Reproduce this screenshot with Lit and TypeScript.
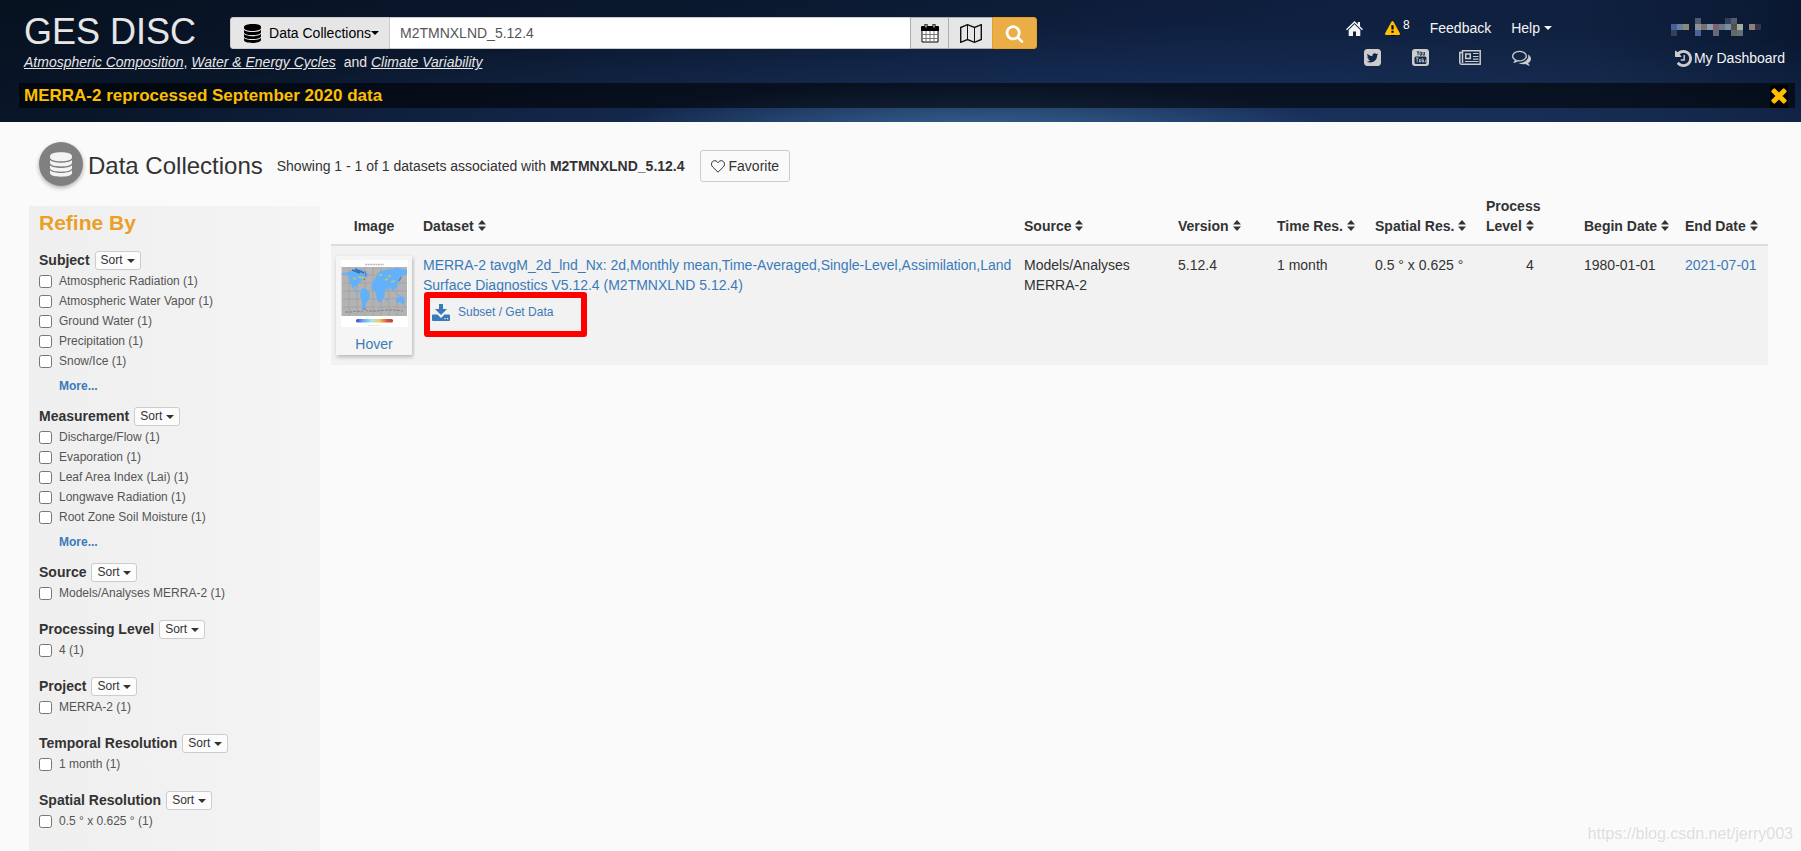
import { LitElement, html, css, svg, nothing } from "lit";
import { customElement } from "lit/decorators.js";

interface Facet {
  name: string;
  items: string[];
  more?: boolean;
}

const FACETS: Facet[] = [
  {
    name: "Subject",
    items: ["Atmospheric Radiation (1)", "Atmospheric Water Vapor (1)", "Ground Water (1)", "Precipitation (1)", "Snow/Ice (1)"],
    more: true,
  },
  {
    name: "Measurement",
    items: ["Discharge/Flow (1)", "Evaporation (1)", "Leaf Area Index (Lai) (1)", "Longwave Radiation (1)", "Root Zone Soil Moisture (1)"],
    more: true,
  },
  { name: "Source", items: ["Models/Analyses MERRA-2 (1)"] },
  { name: "Processing Level", items: ["4 (1)"] },
  { name: "Project", items: ["MERRA-2 (1)"] },
  { name: "Temporal Resolution", items: ["1 month (1)"] },
  { name: "Spatial Resolution", items: ["0.5 ° x 0.625 ° (1)"] },
];

const COLUMNS = ["Dataset", "Source", "Version", "Time Res.", "Spatial Res.", "Process Level", "Begin Date", "End Date"];
const COLUMN_CLASSES = ["c-dataset", "c-source", "c-version", "c-time", "c-spatial", "c-level", "c-begin", "c-end"];

const PATHS = {
  search:
    "M1216 832q0-185-131.5-316.5t-316.5-131.5-316.5 131.5-131.5 316.5 131.5 316.5 316.5 131.5 316.5-131.5 131.5-316.5zm512 832q0 52-38 90t-90 38q-54 0-90-38l-343-342q-179 124-399 124-143 0-273.5-55.5t-225-150-150-225-55.5-273.5 55.5-273.5 150-225 225-150 273.5-55.5 273.5 55.5 225 150 150 225 55.5 273.5q0 220-124 399l343 343q37 37 37 90z",
  times:
    "M1490 1322q0 40-28 68l-136 136q-28 28-68 28t-68-28l-294-294-294 294q-28 28-68 28t-68-28l-136-136q-28-28-28-68t28-68l294-294-294-294q-28-28-28-68t28-68l136-136q28-28 68-28t68 28l294 294 294-294q28-28 68-28t68 28l136 136q28 28 28 68t-28 68l-294 294 294 294q28 28 28 68z",
  history:
    "M1664 896q0 156-61 298t-164 245-245 164-298 61q-172 0-327-72.5t-264-204.5q-7-10-6.5-22.5t8.5-20.5l137-138q10-9 25-9 16 2 23 12 73 95 179 147t225 52q104 0 198.5-40.5t163.5-109.5 109.5-163.5 40.5-198.5-40.5-198.5-109.5-163.5-163.5-109.5-198.5-40.5q-98 0-188 35.5t-160 101.5l137 138q31 30 14 69-17 40-59 40h-448q-26 0-45-19t-19-45v-448q0-42 40-59 39-17 69 14l130 129q107-101 244.5-156.5t284.5-55.5q156 0 298 61t245 164 164 245 61 298zm-640-288v448q0 14-9 23t-23 9h-320q-14 0-23-9t-9-23v-64q0-14 9-23t23-9h224v-352q0-14 9-23t23-9h64q14 0 23 9t9 23z",
  twitter:
    "M1408 610q-56 25-121 34 68-40 93-117-65 38-134 51-61-66-153-66-87 0-148.5 61.5t-61.5 148.5q0 29 5 48-129-7-242-65t-192-155q-29 50-29 106 0 114 91 175-47-1-100-26v2q0 75 50 133.5t123 72.5q-29 8-51 8-13 0-39-4 21 63 74.5 104t121.5 42q-116 90-261 90-26 0-50-3 148 94 322 94 112 0 210-35.5t168-95 120.5-137 75-162 24.5-168.5q0-18-1-27 63-45 105-109zm256-194v960q0 119-84.5 203.5t-203.5 84.5h-960q-119 0-203.5-84.5t-84.5-203.5v-960q0-119 84.5-203.5t203.5-84.5h960q119 0 203.5 84.5t84.5 203.5z",
  comments:
    "M704 384q-153 0-286 52t-211.5 141-78.5 191q0 82 53 158t149 132l97 56-35 84q34-20 62-39l44-31 53 10q78 14 153 14 153 0 286-52t211.5-141 78.5-191-78.5-191-211.5-141-286-52zm0-128q191 0 353.5 68.5t256.5 186.5 94 257-94 257-256.5 186.5-353.5 68.5q-86 0-176-16-124 88-278 128-36 9-86 16h-3q-11 0-20.5-8t-11.5-21q-1-3-1-6.5t.5-6.5 2-6l2.5-5 3.5-5.5 4-5 4.5-5 4-4.5q5-6 23-25t26-29.5 22.5-29 25-38.5 20.5-44q-124-72-195-177t-71-224q0-139 94-257t256.5-186.5 353.5-68.5zm822 1169q10 24 20.5 44t25 38.5 22.5 29 26 29.5 23 25q1 1 4 4.5t4.5 5 4 5 3.5 5.5l2.5 5 2 6 .5 6.5-1 6.5q-3 14-13 22t-22 7q-50-7-86-16-154-40-278-128-90 16-176 16-271 0-472-132 58 4 88 4 161 0 309-45t264-129q125-92 192-212t67-254q0-77-23-152 129 71 204 178t75 230q0 120-71 224.5t-195 176.5z",
  warning:
    "M1024 1375v-190q0-14-9.5-23.5t-22.5-9.5h-192q-13 0-22.5 9.5t-9.5 23.5v190q0 14 9.5 23.5t22.5 9.5h192q13 0 22.5-9.5t9.5-23.5zm-2-374l18-459q0-12-10-19-13-11-24-11h-220q-11 0-24 11-10 7-10 21l17 457q0 10 10 16.5t24 6.5h185q14 0 23.5-6.5t10.5-16.5zm-14-934l768 1408q35 63-2 126-17 29-46.5 46t-63.5 17h-1536q-34 0-63.5-17t-46.5-46q-37-63-2-126l768-1408q17-31 47-49t65-18 65 18 47 49z",
};

const glyph = (d: string, size: number, viewBox = "0 0 1792 1792") => html`
  <svg class="icon" width=${size} height=${size} viewBox=${viewBox} fill="currentColor" aria-hidden="true"><path d=${d} /></svg>
`;

const caret = html`<svg class="icon" width="8" height="4" viewBox="0 0 8 4" fill="currentColor" aria-hidden="true"><path d="M0 0h8L4 4z" /></svg>`;

const sortIcon = html`<svg class="sort-icon" width="8" height="11" viewBox="0 0 8 11" fill="currentColor" aria-hidden="true"><path d="M4 0l4 4.600H0zM4 11L0 6.400h8z" /></svg>`;

const database = (w: number, h: number) => html`
  <svg class="icon" width=${w} height=${h} viewBox="0 0 18 20" fill="currentColor" aria-hidden="true">
    <path d="M0 3.200C0 1 4 0 9 0s9 1 9 3.200v1C18 6.200 14 7.300 9 7.300S0 6.200 0 4.200z" />
    <path d="M0 6.300c1.500 1.600 5 2.200 9 2.200s7.500-.6 9-2.200v2.300c0 2-4 3-9 3s-9-1-9-3z" />
    <path d="M0 10.600c1.500 1.600 5 2.200 9 2.200s7.500-.6 9-2.200v2.300c0 2-4 3-9 3s-9-1-9-3z" />
    <path d="M0 14.800C1.500 16.400 5 17 9 17s7.500-.6 9-2.200V17c0 2-4 3-9 3s-9-1-9-3z" />
  </svg>
`;

/* Privacy mosaic that stands in for the signed-in user's name: [column, row, colour]. */
const MOSAIC: [number, number, string][] = [
  [4, 0, "#4f5b75"], [9, 0, "#33415f"], [10, 0, "#545d70"],
  [0, 1, "#4a5f9a"], [1, 1, "#6580a0"], [2, 1, "#8c8c70"], [4, 1, "#909094"], [5, 1, "#76706e"],
  [6, 1, "#8c9ab0"], [7, 1, "#7c6072"], [8, 1, "#6c7684"], [9, 1, "#7890a4"], [10, 1, "#505050"],
  [11, 1, "#a4ac9f"], [13, 1, "#8c8078"], [14, 1, "#33344a"],
  [0, 2, "#364058"], [4, 2, "#4c629c"], [7, 2, "#646878"], [10, 2, "#646a60"], [11, 2, "#60707c"],
];

@customElement("app-root")
export class AppRoot extends LitElement {
  static styles = css`
    :host {
      display: flex;
      flex-direction: column;
      min-height: 100vh;
      position: relative;
      background: #fafafa;
      color: #333;
      font: 14px/20px "Liberation Sans", Arial, Helvetica, sans-serif;
    }
    * {
      box-sizing: border-box;
    }
    h1, h2, h3, p {
      margin: 0;
    }
    a {
      color: #3b7ab8;
      text-decoration: none;
    }
    button, input {
      font: inherit;
      color: inherit;
      margin: 0;
    }
    button {
      cursor: pointer;
    }
    .icon {
      display: block;
      flex: none;
    }

    .top {
      color: #fff;
      padding: 12px 0 14px;
      background:
        radial-gradient(ellipse 20% 40% at 54% 108%, rgba(62, 110, 158, 0.8), rgba(40, 80, 130, 0) 100%),
        radial-gradient(ellipse 60% 90% at 65% 108%, rgba(28, 54, 100, 0.9), rgba(20, 40, 80, 0) 100%),
        linear-gradient(90deg, rgba(0, 0, 0, 0) 88%, rgba(4, 14, 36, 0.5) 100%),
        linear-gradient(165deg, #06111f 0%, #0b1930 35%, #0f2040 60%, #10233f 100%);
    }
    .masthead {
      display: grid;
      grid-template-columns: 206px minmax(0, 54fr) minmax(0, 50fr);
      padding: 0 16px 0 24px;
    }
    .brand {
      font-size: 36px;
      line-height: 40px;
      font-weight: 400;
      color: #e6e6e6;
    }
    .tagline {
      grid-column: 1 / 3;
      color: #e6e6e6;
    }
    .tagline a {
      color: inherit;
      font-style: italic;
      text-decoration: underline;
    }
    .tagline .and {
      margin-left: 4px;
    }
    .search {
      display: flex;
      height: 32px;
      margin-top: 5px;
      color: #000;
    }
    .search button {
      display: flex;
      align-items: center;
      justify-content: center;
      flex: none;
      padding: 0;
      border: 1px solid #adadad;
      background: #e6e6e6;
    }
    .search .scope {
      width: 160px;
      padding-left: 3px;
      border-color: #ccc;
      border-radius: 3px 0 0 3px;
    }
    .scope .scope-name {
      margin-left: 8px;
    }
    .search input {
      flex: 1;
      min-width: 0;
      border: 1px solid #ccc;
      border-left: 0;
      border-right: 0;
      padding: 0 10px;
      color: #555;
      background: #fff;
      outline: 0;
    }
    .search .calendar {
      width: 39px;
    }
    .search .map {
      width: 43px;
      border-left: 0;
      border-right: 0;
    }
    .search .go {
      width: 45px;
      color: #fff;
      background: #ebad45;
      border-color: #e8a02b;
      border-radius: 0 3px 3px 0;
    }
    .tools {
      grid-column: 3;
      grid-row: 1 / 3;
      display: flex;
      justify-content: flex-end;
      gap: 119px;
      padding-top: 6px;
    }
    .tools a {
      color: #f4f4f4;
      display: flex;
      align-items: center;
    }
    .tools-row {
      display: flex;
      align-items: center;
      height: 20px;
      gap: 20px;
    }
    .tools-row .warn {
      color: #fdbf00;
      gap: 3px;
      margin-left: 2px;
    }
    .warn svg {
      background: linear-gradient(#000, #000) center 9px / 4px 9px no-repeat;
    }
    .warn sup {
      font-size: 12px;
      line-height: 12px;
      color: #fff;
      padding-bottom: 6px;
    }
    .tools-row .help {
      gap: 4px;
    }
    .social {
      display: flex;
      align-items: center;
      justify-content: space-between;
      height: 20px;
      margin-top: 9px;
      padding: 0 21px 0 18px;
    }
    .social a {
      color: #ccc;
    }
    .user {
      min-width: 114px;
    }
    .user .dashboard {
      justify-content: flex-end;
      margin-top: 12px;
      gap: 2px;
    }
    .dashboard .icon {
      color: #ccc;
    }
    .notice {
      display: flex;
      align-items: center;
      justify-content: space-between;
      height: 25px;
      margin: 11px 6px 0 19px;
      padding: 1px 7px 0 5px;
      background: rgba(0, 0, 0, 0.58);
      color: #fdbf00;
      font-size: 17px;
      font-weight: 700;
    }
    .notice a {
      color: inherit;
    }
    .notice button {
      border: 0;
      padding: 0;
      width: 18px;
      height: 23px;
      background: #000;
      display: flex;
      align-items: center;
      justify-content: center;
    }

    .heading {
      display: flex;
      align-items: center;
      padding: 20px 39px 0;
      height: 68px;
    }
    .badge {
      width: 44px;
      height: 44px;
      border-radius: 50%;
      margin-bottom: 4px;
      display: grid;
      place-items: center;
      background: #808080;
      color: #f4f4f4;
      box-shadow: 0 2px 4px rgba(0, 0, 0, 0.3);
    }
    .heading h1 {
      font-size: 24px;
      line-height: 28px;
      font-weight: 400;
      margin: 0 14px 0 5px;
    }
    .favorite {
      display: flex;
      align-items: center;
      gap: 4px;
      height: 32px;
      margin-left: 15px;
      padding: 0 10px;
      border: 1px solid #ccc;
      border-radius: 3px;
      background: #fafafa;
    }

    .content {
      flex: 1;
      display: grid;
      grid-template-columns: 291px minmax(0, 1fr);
      gap: 11px;
      padding: 0 33px 0 29px;
    }
    .refine {
      margin-top: 16px;
      padding: 5px 10px 0;
      background: linear-gradient(90deg, #efefef, #f4f4f4);
    }
    .refine h2 {
      margin-bottom: 16px;
      font-size: 21px;
      line-height: 24px;
      color: #eb9f27;
    }
    .facet {
      margin-bottom: 17px;
    }
    .facet.has-more {
      margin-bottom: 11px;
    }
    .facet-head {
      display: flex;
      align-items: flex-start;
      gap: 5px;
      height: 20px;
    }
    .facet-head h3 {
      font-size: 14px;
      line-height: 18px;
    }
    .sort {
      display: flex;
      align-items: center;
      gap: 4px;
      height: 19px;
      padding: 0 5px;
      border: 1px solid #ccc;
      border-radius: 3px;
      background: #fcfcfc;
      font-size: 12px;
      line-height: 17px;
    }
    .facet label {
      display: flex;
      align-items: center;
      gap: 7px;
      height: 20px;
      font-size: 12px;
      color: #555;
    }
    .facet input {
      width: 13px;
      height: 13px;
    }
    .more {
      display: block;
      margin: 5px 0 0 20px;
      font-size: 12px;
      font-weight: 700;
    }

    table {
      width: 100%;
      border-collapse: separate;
      border-spacing: 0;
      table-layout: fixed;
    }
    th, td {
      text-align: left;
      vertical-align: top;
      padding: 9px 5px 9px 8px;
    }
    th {
      vertical-align: bottom;
      padding: 6px 4px 8px 8px;
      border-bottom: 2px solid #ddd;
    }
    td {
      background: #f2f2f2;
    }
    th button {
      border: 0;
      padding: 0;
      background: none;
      font-weight: 700;
      text-align: left;
    }
    .sort-icon {
      margin-left: 4px;
    }
    .c-image { width: 84px; }
    .c-source { width: 154px; }
    .c-version { width: 99px; }
    .c-time { width: 98px; }
    .c-spatial { width: 111px; }
    .c-level { width: 98px; }
    .c-begin { width: 101px; }
    .c-end { width: 91px; }
    th.c-image {
      text-align: center;
      padding-left: 6px;
    }
    td.c-image {
      padding: 10px 3px 10px 5px;
    }
    td.c-level {
      text-align: center;
    }
    td.c-level, td.c-dataset {
      padding-right: 2px;
    }
    .thumb {
      display: flex;
      flex-direction: column;
      align-items: center;
      gap: 7px;
      padding: 4px 4px 1px;
      background: #f5f5f5;
      box-shadow: 1px 2px 4px rgba(0, 0, 0, 0.25);
    }
    .subset {
      position: relative;
      padding: 8px 0 17px 9px;
    }
    .subset a {
      display: flex;
      align-items: center;
      gap: 8px;
      width: max-content;
      height: 18px;
      font-size: 12px;
    }
    .callout {
      position: absolute;
      left: 1px;
      top: -3px;
      width: 163px;
      height: 45px;
      border: 6px solid #f00;
      border-radius: 3px;
      pointer-events: none;
    }
    .watermark {
      position: absolute;
      right: 8px;
      bottom: 7px;
      font-size: 16px;
      color: #dedede;
      text-shadow: -1px -1px 0 #fff;
    }
  `;

  private renderHeader() {
    return html`
      <header class="top">
        <div class="masthead">
          <div class="brand">GES DISC</div>
          <form class="search" role="search" @submit=${(e: Event) => e.preventDefault()}>
            <button class="scope" type="button">
              ${database(17, 19)}<span class="scope-name">Data Collections</span>${caret}
            </button>
            <input type="text" aria-label="Search datasets" value="M2TMNXLND_5.12.4" />
            <button class="calendar" type="button" aria-label="Date range">
              <svg class="icon" width="18" height="19" viewBox="0 0 18 19" aria-hidden="true">
                <path d="M1 3h16v15H1z" fill="#fff" stroke="#000" />
                <path d="M0 3q0-1 1-1h16q1 0 1 1v4H0z" />
                <path d="M1 10.500h16M1 14.500h16M5 7v11M9 7v11M13 7v11" stroke="#777" fill="none" />
                <path d="M4 0h2v4H4zM12 0h2v4h-2z" fill="#fff" stroke="#000" />
              </svg>
            </button>
            <button class="map" type="button" aria-label="Spatial region">
              <svg class="icon" width="22" height="19" viewBox="0 0 22 19" fill="none" stroke="#111" aria-hidden="true">
                <path d="M.700 3.500L7.500.700l7 2.800L21.300.700v14.800l-6.800 2.800-7-2.800-6.800 2.800z" stroke-width="1.400" />
                <path d="M7.500.700v14.800M14.500 3.500v14.800" />
              </svg>
            </button>
            <button class="go" type="submit" aria-label="Search">${glyph(PATHS.search, 19)}</button>
          </form>
          <p class="tagline">
            <a href="#">Atmospheric Composition</a>, <a href="#">Water &amp; Energy Cycles</a>
            <span class="and">and</span> <a href="#">Climate Variability</a>
          </p>
          <div class="tools">
            <nav>
              <div class="tools-row">
                <a href="#" aria-label="Home">
                  <svg class="icon" width="17" height="15" viewBox="0 0 17 15" fill="currentColor" aria-hidden="true">
                    <path d="M8.500 0l3.300 3.200V1H14v4.300L17 8.200l-1 1L8.500 2 1 9.200l-1-1z" />
                    <path d="M8.500 3.300l5.800 5.600V15H10v-4.500H7V15H2.700V8.900z" />
                  </svg>
                </a>
                <a href="#" class="warn" aria-label="Alerts">
                  <svg class="icon" width="15" height="15" viewBox="0 0 1792 1792" fill="currentColor" aria-hidden="true">
                    <path d="M700 480h392v960H700z" fill="#000" />
                    <path d=${PATHS.warning} />
                  </svg>
                  <sup>8</sup>
                </a>
                <a href="#">Feedback</a>
                <a href="#" class="help">Help ${caret}</a>
              </div>
              <div class="social">
                <a href="#" aria-label="Twitter">${glyph(PATHS.twitter, 17, "128 128 1536 1536")}</a>
                <a href="#" aria-label="YouTube">
                  <svg class="icon" width="17" height="17" viewBox="0 0 17 17" aria-hidden="true">
                    <rect width="17" height="17" rx="3" fill="#ccc" />
                    <rect x="2.500" y="7.500" width="12" height="7.500" rx="1.500" fill="#142a4c" />
                    <path d="M5 2l1 2 1-2M6 4v2.300M8 3.200h1.500v3H8zM11 3v3.200h1.500V3" fill="none" stroke="#142a4c" stroke-width=".8" />
                    <path d="M4 9h2.500M5.200 9v4.500M7.500 10v3h1.300v-3M10.300 9v4h1.200v-2.500M12.700 13h1.200v-2.500" fill="none" stroke="#ccc" stroke-width=".8" />
                  </svg>
                </a>
                <a href="#" aria-label="News">
                  <svg class="icon" width="22" height="15" viewBox="0 0 22 15" fill="none" stroke="currentColor" aria-hidden="true">
                    <path d="M3.500 13V.800h17.700v13.400H2.300Q.800 14.200.800 12.500V2.500h2.700" stroke-width="1.500" />
                    <path d="M6.700 4h4.600v4.500H6.700z" stroke-width="1.500" />
                    <path d="M14 3.500h5.500M14 6.500h5.500M14 9.200h5.500M6 11.500h13.500" stroke-width="1.200" />
                  </svg>
                </a>
                <a href="#" aria-label="Forum">${glyph(PATHS.comments, 19)}</a>
              </div>
            </nav>
            <div class="user">
              <svg class="icon" width="90" height="18" viewBox="0 0 90 18" shape-rendering="crispEdges" aria-hidden="true">
                ${MOSAIC.map(([x, y, c]) => svg`<rect x=${x * 6} y=${y * 6} width="6" height="6" fill=${c} />`)}
              </svg>
              <a class="dashboard" href="#">${glyph(PATHS.history, 17, "128 128 1536 1536")}My Dashboard</a>
            </div>
          </div>
        </div>
        <div class="notice">
          <a href="#">MERRA-2 reprocessed September 2020 data</a>
          <button type="button" aria-label="Dismiss">${glyph(PATHS.times, 16, "280 344 1232 1232")}</button>
        </div>
      </header>
    `;
  }

  private renderFacet(facet: Facet) {
    return html`
      <section class="facet ${facet.more ? "has-more" : ""}">
        <div class="facet-head">
          <h3>${facet.name}</h3>
          <button class="sort" type="button">Sort ${caret}</button>
        </div>
        ${facet.items.map((item) => html`<label><input type="checkbox" />${item}</label>`)}
        ${facet.more ? html`<a class="more" href="#">More...</a>` : nothing}
      </section>
    `;
  }

  private renderThumbnail() {
    return html`
      <svg class="icon" width="67" height="67" viewBox="0 0 67 67" role="img" aria-label="World map preview">
        <defs>
          <linearGradient id="scale">
            <stop offset="0" stop-color="#4444dd" />
            <stop offset=".2" stop-color="#6aa8f0" />
            <stop offset=".42" stop-color="#a8e4ee" />
            <stop offset=".62" stop-color="#f0d060" />
            <stop offset=".85" stop-color="#d85040" />
            <stop offset="1" stop-color="#b04040" />
          </linearGradient>
        </defs>
        <path fill="#fff" d="M0 0h67v67H0z" />
        <path d="M24 4.500h19" stroke="#aaa" stroke-width="1.500" stroke-dasharray="2 .6" opacity=".8" />
        <path fill="#b3b3b3" d="M.500 7H66v49H.500z" />
        <path d="M1 15h65M1 23h65M1 31h65M1 39h65M1 47h65M8 7v49M16 7v49M24 7v49M32 7v49M40 7v49M48 7v49M56 7v49" stroke="#999" stroke-width=".5" />
        <g fill="#63b1fa">
          <path d="M2 13l6-1 4-2 9-1 3 3 4 2-2 3-4 1-3 5-2 1-1 3-3-1 1 4 3 1 1 2-3-1-4-5-2-5-1-5-4-3-4 1z" />
          <path d="M20 29l4-1 3 3 2 3-1 5-2 3-2 5-1 3-2 0 0-8-2-6z" />
          <path d="M33 22l4-2 5 1 3 5 1 1-2 5-1 5-3 5-3 0-2-7-1-4-3-1-1-4z" />
          <path d="M34 19l2-4 3-4 5-1 6-1 7-1 9 2v4l-4 1-2 5-3 3-1 4-3 3 1 3-3-3-2-3-2 4-2-4-4-2-3-2-4 1-3-1z" />
          <path d="M55 39l4-3 2 1 1-1 2 6-2 3-3-3-4 1zM53 33l4 2 4 1-4 0zM46 37l1 2-1 3-1-2zM64 46l1 1-2 2z" />
        </g>
        <path d="M11 10l8 3M14 9l9 4" stroke="#2f70b0" stroke-width="1.500" />
        <path d="M12 18l3 1M17 17l6 1M38 15l3 0M44 20l3-1M50 22l4-1M47 16l3 0" stroke="#d8cf50" stroke-width="1.500" opacity=".85" />
        <path d="M24 11l1 5M22 20l2-1M60 17l-2 4" stroke="#d04038" stroke-width="1" opacity=".8" />
        <path d="M27 9l2 3 2-3z" fill="#bbb" />
        <path d="M4 52l7 0 4-1 6 1 3-4 2 3h10l8-1 10 0 8 1" fill="none" stroke="#777" stroke-width=".8" stroke-dasharray="3 1" />
        <rect x="15" y="59" width="37" height="3.500" rx="1.500" fill="url(#scale)" />
        <path d="M27 65.500h13" stroke="#ddd" stroke-dasharray="2 .6" />
      </svg>
    `;
  }

  private renderTable() {
    return html`
      <table>
        <thead>
          <tr>
            <th class="c-image" scope="col">Image</th>
            ${COLUMNS.map(
              (name, i) => html`<th class=${COLUMN_CLASSES[i]} scope="col"><button type="button">${name}${sortIcon}</button></th>`
            )}
          </tr>
        </thead>
        <tbody>
          <tr>
            <td class="c-image"><a class="thumb" href="#">${this.renderThumbnail()}<span>Hover</span></a></td>
            <td class="c-dataset">
              <a href="#">MERRA-2 tavgM_2d_lnd_Nx: 2d,Monthly mean,Time-Averaged,Single-Level,Assimilation,Land Surface Diagnostics V5.12.4 (M2TMNXLND 5.12.4)</a>
              <div class="subset">
                <a href="#">
                  <svg class="icon" width="18" height="17" viewBox="0 0 18 17" fill="currentColor" aria-hidden="true">
                    <path d="M7 0h4v5h4L9 11 3 5h4z" />
                    <path fill-rule="evenodd" d="M1 10.500h4.500L9 14l3.500-3.500H17q1 0 1 1V16q0 1-1 1H1q-1 0-1-1v-4.500q0-1 1-1zM12.500 14v1.200h1.200V14zm2.500 0v1.200h1.200V14z" />
                  </svg>
                  Subset / Get Data
                </a>
                <span class="callout"></span>
              </div>
            </td>
            <td>Models/Analyses MERRA-2</td>
            <td>5.12.4</td>
            <td>1 month</td>
            <td>0.5 ° x 0.625 °</td>
            <td class="c-level">4</td>
            <td>1980-01-01</td>
            <td><a href="#">2021-07-01</a></td>
          </tr>
        </tbody>
      </table>
    `;
  }

  render() {
    return html`
      ${this.renderHeader()}
      <div class="heading">
        <span class="badge">${database(22, 25)}</span>
        <h1>Data Collections</h1>
        <p>Showing 1 - 1 of 1 datasets associated with <strong>M2TMNXLND_5.12.4</strong></p>
        <button class="favorite" type="button">
          <svg class="icon" width="14" height="13" viewBox="0 0 14 13" fill="none" stroke="currentColor" aria-hidden="true">
            <path d="M7 12.200L1.600 6.900C-.600 4.500.700.700 3.800.700 5.500.700 6.500 2 7 2.800 7.500 2 8.500.700 10.200.700c3.100 0 4.400 3.800 2.200 6.200z" />
          </svg>
          Favorite
        </button>
      </div>
      <div class="content">
        <aside class="refine">
          <h2>Refine By</h2>
          ${FACETS.map((f) => this.renderFacet(f))}
        </aside>
        <main>${this.renderTable()}</main>
      </div>
      <div class="watermark">https://blog.csdn.net/jerry003</div>
    `;
  }
}
